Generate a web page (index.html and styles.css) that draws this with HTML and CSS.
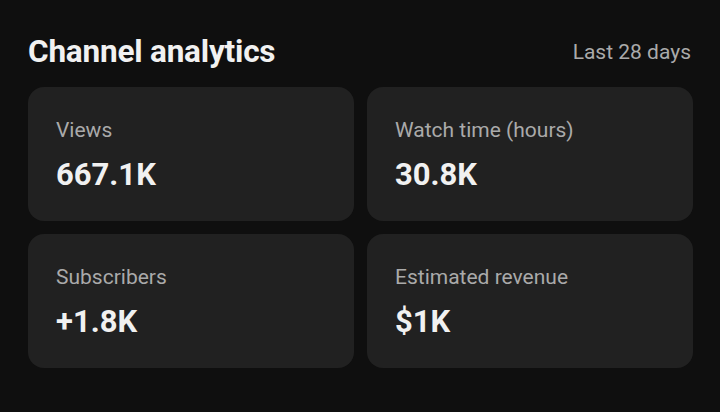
FILE: index.html
```html
<!DOCTYPE html>
<html lang="en">
<head>
    <meta charset="UTF-8">
    <meta name="viewport" content="width=device-width, initial-scale=1.0">
    <title>Channel analytics</title>
    <link rel="stylesheet" href="styles.css">
</head>
<body>
    <div class="container">
        <div class="header">
            <h2>Channel analytics</h2>
            <span class="period">Last 28 days</span>
        </div>
        <div class="stats">
            <div class="stat-card">
                <div class="stat-label">Views</div>
                <div class="stat-value">667.1K</div>
            </div>
            <div class="stat-card">
                <div class="stat-label">Watch time (hours)</div>
                <div class="stat-value">30.8K</div>
            </div>
            <div class="stat-card">
                <div class="stat-label">Subscribers</div>
                <div class="stat-value">+1.8K</div>
            </div>
            <div class="stat-card">
                <div class="stat-label">Estimated revenue</div>
                <div class="stat-value">$1K</div>
            </div>
        </div>
    </div>
</body>
</html>
```

FILE: styles.css
```css
body {
    margin: 0;
    font-family: Roboto, "Liberation Sans", Arial, sans-serif;
    background-color: #0f0f0f;
    color: #f1f1f1;
}
.container {
    padding: 33px 27px 0 28px;
}
.header {
    display: flex;
    align-items: center;
    justify-content: space-between;
    height: 38px;
    margin-bottom: 16px;
}
.header h2 {
    margin: 0;
    font-size: 31.5px;
    font-weight: 700;
    line-height: 38px;
    letter-spacing: -0.2px;
}
.period {
    font-size: 21px;
    line-height: 25px;
    color: #aaaaaa;
    padding-right: 2px;
}
.stats {
    display: grid;
    grid-template-columns: 1fr 1fr;
    gap: 13px;
}
.stat-card {
    background-color: #212121;
    border-radius: 16px;
    height: 134px;
    padding: 0 28px;
    box-sizing: border-box;
}
.stat-label {
    font-size: 21px;
    color: #aaaaaa;
    padding-top: 29px;
    line-height: 28px;
}
.stat-value {
    font-size: 31px;
    font-weight: 700;
    line-height: 36px;
    margin-top: 13px;
}
```
